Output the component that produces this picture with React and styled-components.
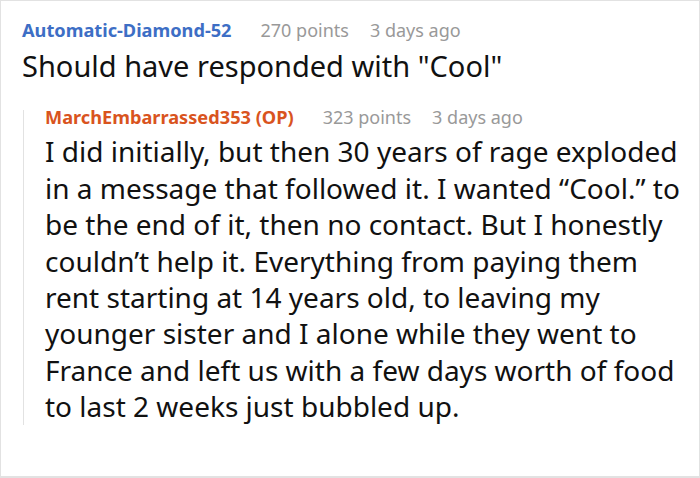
import React from "react";
import styled, { createGlobalStyle } from "styled-components";

const Global = createGlobalStyle`
  html, body { margin: 0; padding: 0; background: #fff; }
  body { font-family: "Noto Sans", "Open Sans", sans-serif; }
`;

const Frame = styled.div`
  box-sizing: border-box;
  width: 700px;
  height: 478px;
  border: 1px solid #e2e2e2;
  border-bottom-width: 2px;
  padding: 22px 9px 0 21px;
  overflow: hidden;
`;

const Meta = styled.div`
  display: flex;
  align-items: baseline;
  gap: 21px;
  font-size: 18px;
  line-height: 14px;
  white-space: nowrap;
`;

const Author = styled.span`
  font-weight: 700;
  font-size: 18.2px;
  color: ${(p) => p.$color};
  margin-right: 8px;
`;

const Info = styled.span`
  color: #999;
`;

const Body = styled.p`
  margin: ${(p) => p.$gap}px 0 0;
  font-size: ${(p) => p.$size}px;
  line-height: 36.4px;
  color: #111;
`;

const Reply = styled.div`
  margin: 26px 0 0 1px;
  border-left: 1px solid #e2e2e2;
  padding-left: 21px;
`;

const Comment = ({ author, color, points, age, gap, size, children }) => (
  <div>
    <Meta>
      <Author $color={color}>{author}</Author>
      <Info>{points} points</Info>
      <Info>{age}</Info>
    </Meta>
    <Body $gap={gap} $size={size}>{children}</Body>
  </div>
);

export default function App() {
  return (
    <>
      <Global />
      <Frame>
        <Comment author="Automatic-Diamond-52" color="#3d6ec5" points="270" age="3 days ago" gap={11} size={29}>
          Should have responded with "Cool"
        </Comment>
        <Reply>
          <Comment author="MarchEmbarrassed353 (OP)" color="#d9541e" points="323" age="3 days ago" gap={9} size={28}>
            I did initially, but then 30 years of rage exploded in a message that followed it. I wanted “Cool.” to be the end of it, then no contact. But I honestly couldn’t help it. Everything from paying them rent starting at 14 years old, to leaving my younger sister and I alone while they went to France and left us with a few days worth of food to last 2 weeks just bubbled up.
          </Comment>
        </Reply>
      </Frame>
    </>
  );
}
